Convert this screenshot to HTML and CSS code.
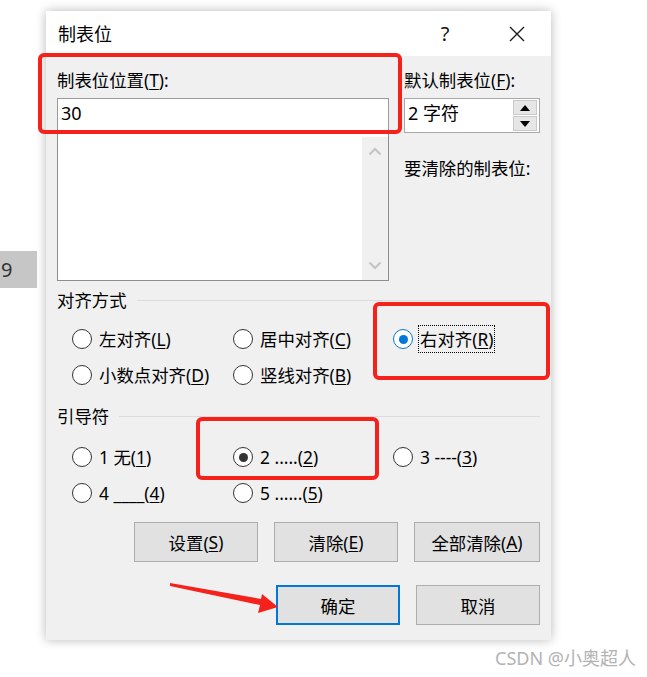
FILE: index.html
```html
<!DOCTYPE html>
<html lang="zh-CN">
<head>
<meta charset="utf-8">
<title>制表位</title>
<link rel="stylesheet" href="styles.css">
</head>
<body>
<div class="screen">
  <div class="side-cell">9</div>
  <div class="dialog">
    <div class="titlebar">
      <span class="title">制表位</span>
      <div class="tb-buttons">
        <span class="tb-btn help">?</span>
        <span class="tb-btn close">
          <svg width="16" height="16" viewBox="0 0 16 16"><path d="M1 1 L15 15 M15 1 L1 15" stroke="#1a1a1a" stroke-width="1.4" fill="none"/></svg>
        </span>
      </div>
    </div>
    <div class="content">
      <div class="top">
        <div class="left-col">
          <div class="label">制表位位置(<u>T</u>):</div>
          <div class="input">30</div>
          <div class="list">
            <div class="scrollbar">
              <svg width="14" height="9" viewBox="0 0 14 9"><path d="M1.5 7.5 L7 2 L12.5 7.5" stroke="#c4c4c4" stroke-width="2" fill="none"/></svg>
              <svg width="14" height="9" viewBox="0 0 14 9"><path d="M1.5 1.5 L7 7 L12.5 1.5" stroke="#c4c4c4" stroke-width="2" fill="none"/></svg>
            </div>
          </div>
        </div>
        <div class="right-col">
          <div class="label">默认制表位(<u>F</u>):</div>
          <div class="spin">
            <span class="spin-value">2 字符</span>
            <div class="spin-btns">
              <span class="spin-btn"><svg width="10" height="6" viewBox="0 0 10 6"><path d="M0 6 L5 0 L10 6 Z" fill="#000"/></svg></span>
              <span class="spin-btn"><svg width="10" height="6" viewBox="0 0 10 6"><path d="M0 0 L5 6 L10 0 Z" fill="#000"/></svg></span>
            </div>
          </div>
          <div class="label clear-label">要清除的制表位:</div>
        </div>
      </div>

      <div class="group-head g1"><span>对齐方式</span><span class="rule"></span></div>
      <div class="radios r1">
        <div class="radio"><span class="dot"></span><span class="rlabel">左对齐(<u>L</u>)</span></div>
        <div class="radio"><span class="dot"></span><span class="rlabel">居中对齐(<u>C</u>)</span></div>
        <div class="radio"><span class="dot on-blue"></span><span class="rlabel focus">右对齐(<u>R</u>)</span></div>
        <div class="radio"><span class="dot"></span><span class="rlabel">小数点对齐(<u>D</u>)</span></div>
        <div class="radio"><span class="dot"></span><span class="rlabel">竖线对齐(<u>B</u>)</span></div>
      </div>

      <div class="group-head g2"><span>引导符</span><span class="rule"></span></div>
      <div class="radios r2">
        <div class="radio"><span class="dot"></span><span class="rlabel">1 无(<u>1</u>)</span></div>
        <div class="radio"><span class="dot on-dark"></span><span class="rlabel">2 .....(<u>2</u>)</span></div>
        <div class="radio"><span class="dot"></span><span class="rlabel">3 ----(<u>3</u>)</span></div>
        <div class="radio"><span class="dot"></span><span class="rlabel">4 ____(<u>4</u>)</span></div>
        <div class="radio"><span class="dot"></span><span class="rlabel">5 ......(<u>5</u>)</span></div>
      </div>

      <div class="btn-row row1">
        <span class="btn">设置(<u>S</u>)</span>
        <span class="btn">清除(<u>E</u>)</span>
        <span class="btn wide">全部清除(<u>A</u>)</span>
      </div>
      <div class="btn-row row2">
        <span class="btn default">确定</span>
        <span class="btn">取消</span>
      </div>
    </div>
  </div>

  <div class="mark m1"></div>
  <div class="mark m2"></div>
  <div class="mark m3"></div>
  <svg class="arrow" width="647" height="677" viewBox="0 0 647 677">
    <polygon points="170,583 261,599 262,594 278,607 258,613 260,605 170,586" fill="#f5221b"/>
  </svg>
  <div class="watermark">CSDN @小奥超人</div>
</div>
</body>
</html>
```
FILE: styles.css
```css
html, body {
  margin: 0;
  padding: 0;
  background: #ffffff;
}
body {
  font-family: "Noto Sans", "Noto Sans CJK SC", sans-serif;
  font-size: 17.4px;
  color: #000;
}
.screen {
  position: relative;
  width: 647px;
  height: 677px;
  padding: 11px 0 0 46px;
  box-sizing: border-box;
  overflow: hidden;
}
u {
  text-decoration: underline;
  text-decoration-thickness: 1px;
  text-underline-offset: 2px;
}
.side-cell {
  position: absolute;
  left: 0;
  top: 251px;
  width: 37px;
  height: 37px;
  background: #c6c6c6;
  color: #333;
  font-size: 20px;
  line-height: 37px;
  padding-left: 1px;
  box-sizing: border-box;
}
.dialog {
  width: 505px;
  background: #f0f0f0;
  box-shadow: 0 0 10px rgba(0,0,0,0.28);
}
.titlebar {
  height: 45px;
  background: #fff;
  display: flex;
  align-items: center;
  justify-content: space-between;
  padding-left: 12px;
}
.title {
  font-size: 18px;
  line-height: 24px;
}
.tb-buttons {
  display: flex;
  height: 45px;
}
.tb-btn {
  width: 69px;
  height: 45px;
  display: flex;
  align-items: center;
  justify-content: center;
}
.help {
  font-family: "Noto Sans", sans-serif;
  font-size: 20px;
  color: #111;
  padding-right: 5px;
  box-sizing: border-box;
}
.content {
  padding: 12px 10px 15px 11px;
}
.top {
  display: flex;
  gap: 15px;
}
.left-col {
  width: 332px;
  display: flex;
  flex-direction: column;
}
.right-col {
  width: 136px;
  display: flex;
  flex-direction: column;
}
.label {
  line-height: 24px;
  height: 24px;
  margin-bottom: 6px;
  white-space: nowrap;
}
.input {
  height: 35px;
  box-sizing: border-box;
  border: 1px solid #9a9a9a;
  background: #fff;
  padding-left: 3px;
  font-size: 18px;
  line-height: 29px;
}
.list {
  height: 148px;
  box-sizing: border-box;
  border: 1px solid #8e8e8e;
  border-top: none;
  background: #fff;
  display: flex;
  justify-content: flex-end;
}
.scrollbar {
  width: 26px;
  background: #f0f0f0;
  margin-top: 4px;
  display: flex;
  flex-direction: column;
  justify-content: space-between;
  align-items: center;
  padding: 10px 0 10px;
  box-sizing: border-box;
}
.spin {
  height: 35px;
  box-sizing: border-box;
  border: 1px solid #a8a8a8;
  background: #fff;
  display: flex;
  justify-content: space-between;
  align-items: center;
  padding: 0 2px 0 3px;
}
.spin-value {
  font-size: 18px;
  line-height: 29px;
  align-self: flex-start;
}
.spin-btns {
  display: flex;
  flex-direction: column;
  gap: 1px;
}
.spin-btn {
  width: 24px;
  height: 15px;
  box-sizing: border-box;
  background: #e6e6e6;
  border: 1px solid #c9c9c9;
  display: flex;
  align-items: center;
  justify-content: center;
}
.clear-label {
  margin-top: 23px;
  margin-bottom: 0;
}
.group-head {
  display: flex;
  align-items: center;
  gap: 10px;
  height: 24px;
  line-height: 24px;
}
.group-head .rule {
  flex: 1;
  height: 1px;
  background: #dcdcdc;
  margin-right: 1px;
}
.g1 { margin-top: 7px; }
.g2 { margin-top: 11px; }
.radios {
  display: grid;
  grid-template-columns: 161px 160px auto;
  grid-auto-rows: 36px;
  padding-left: 15px;
}
.r1 { margin-top: 9px; }
.r2 { margin-top: 11px; }
.radio {
  display: flex;
  align-items: center;
  gap: 6px;
  white-space: nowrap;
}
.dot {
  width: 20px;
  height: 20px;
  box-sizing: border-box;
  border: 1.5px solid #333;
  border-radius: 50%;
  background: #fff;
  display: flex;
  align-items: center;
  justify-content: center;
  flex: none;
}
.dot.on-blue { border-color: #0078d7; }
.dot.on-blue::after,
.dot.on-dark::after {
  content: "";
  width: 9px;
  height: 9px;
  border-radius: 50%;
}
.dot.on-blue::after { background: #0078d7; }
.dot.on-dark::after { background: #333; }
.rlabel {
  line-height: 24px;
  padding: 0 1px;
}
.rlabel.focus {
  outline: 1px dotted #000;
  outline-offset: 0;
  line-height: 24px;
  padding: 1px 1px;
}
.btn-row {
  display: flex;
  justify-content: flex-end;
  gap: 16px;
  padding-right: 1px;
}
.row1 { margin-top: 11px; }
.row2 { margin-top: 23px; }
.btn {
  width: 124px;
  height: 40px;
  box-sizing: border-box;
  background: #e1e1e1;
  border: 1px solid #adadad;
  display: flex;
  align-items: center;
  justify-content: center;
  white-space: nowrap;
}
.btn.wide { width: 126px; }
.btn.default {
  border: 2px solid #0078d7;
}
.mark {
  position: absolute;
  border: 4px solid #f5221b;
  border-radius: 6px;
  box-sizing: border-box;
}
.m1 { left: 38px; top: 53px; width: 364px; height: 81px; }
.m2 { left: 373px; top: 302px; width: 177px; height: 78px; }
.m3 { left: 196px; top: 417px; width: 183px; height: 63px; }
.arrow {
  position: absolute;
  left: 0;
  top: 0;
  pointer-events: none;
}
.watermark {
  position: absolute;
  left: 495px;
  top: 646px;
  font-size: 18px;
  line-height: 24px;
  color: #b3b3b3;
  white-space: nowrap;
}
```
